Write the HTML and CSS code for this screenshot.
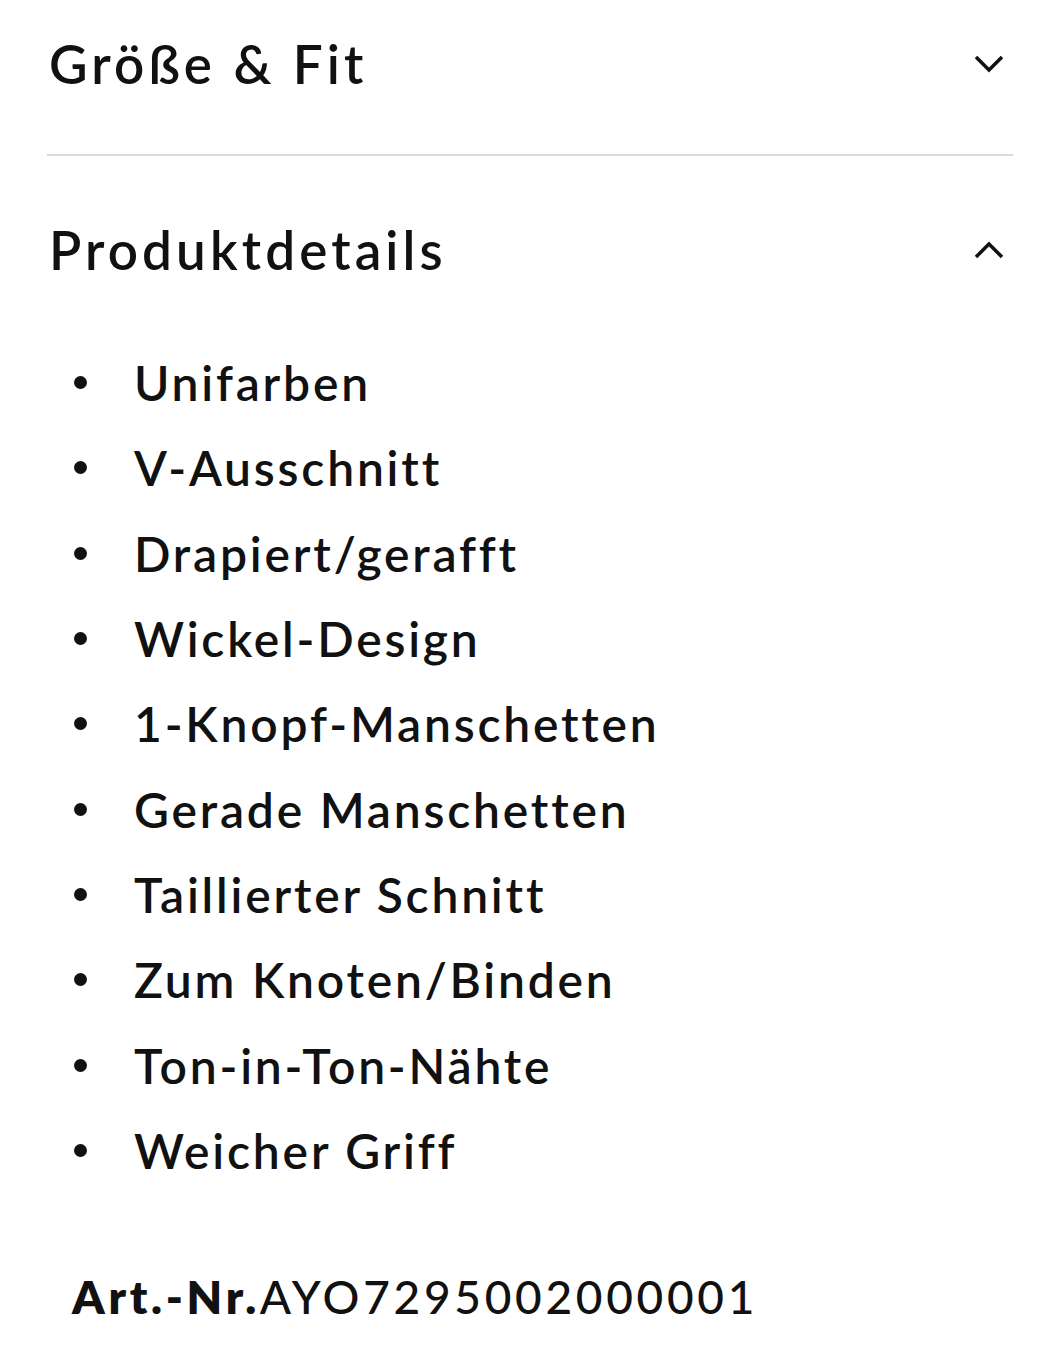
FILE: index.html
```html
<!DOCTYPE html>
<html lang="de">
<head>
<meta charset="utf-8">
<title>Produktdetails</title>
<link rel="stylesheet" href="styles.css">
</head>
<body>
<div class="page">
  <section class="acc acc-closed">
    <div class="acc-head">
      <h2 class="acc-title">Größe &amp; Fit</h2>
      <svg class="chev" width="30" height="18" viewBox="0 0 30 18"><path d="M2 2 L15 15 L28 2" fill="none" stroke="#111" stroke-width="3.5"/></svg>
    </div>
  </section>
  <section class="acc acc-open">
    <div class="acc-head">
      <h2 class="acc-title">Produktdetails</h2>
      <svg class="chev" width="30" height="18" viewBox="0 0 30 18"><path d="M2 16 L15 3 L28 16" fill="none" stroke="#111" stroke-width="3.5"/></svg>
    </div>
    <ul class="details">
      <li>Unifarben</li>
      <li>V-Ausschnitt</li>
      <li>Drapiert/gerafft</li>
      <li>Wickel-Design</li>
      <li>1-Knopf-Manschetten</li>
      <li>Gerade Manschetten</li>
      <li>Taillierter Schnitt</li>
      <li>Zum Knoten/Binden</li>
      <li>Ton-in-Ton-Nähte</li>
      <li>Weicher Griff</li>
    </ul>
    <p class="artnr"><b>Art.-Nr.</b>AYO7295002000001</p>
  </section>
</div>
</body>
</html>
```
FILE: styles.css
```css
html, body {
  margin: 0;
  padding: 0;
  background: #fff;
}
body {
  font-family: Lato, "Noto Sans", sans-serif;
  color: #111;
}
.page {
  padding: 0 47px 0 47px;
}
.acc-head {
  display: flex;
  justify-content: space-between;
  align-items: center;
  height: 128px;
  padding-right: 9px;
}
.acc-title {
  margin: 0;
  padding-left: 2px;
  font-size: 53px;
  font-weight: 600;
  line-height: 128px;
  letter-spacing: 4.1px;
}
.acc-closed {
  padding-bottom: 26px;
  border-bottom: 2px solid #dadada;
}
.acc-open {
  padding-top: 30px;
}
.details {
  list-style: none;
  margin: 0;
  padding: 26px 0 0 27px;
}
.details li {
  display: flex;
  align-items: center;
  height: 85.3px;
  font-size: 48px;
  font-weight: 600;
  letter-spacing: 2.8px;
}
.details li::before {
  content: "";
  width: 13px;
  height: 13px;
  border-radius: 50%;
  background: #111;
  margin-right: 47px;
  flex: none;
}
.artnr {
  margin: 74px 0 0 25px;
  font-size: 46px;
  line-height: 60px;
  font-weight: 500;
  letter-spacing: 3.7px;
}
.artnr b {
  font-weight: 800;
}
```
